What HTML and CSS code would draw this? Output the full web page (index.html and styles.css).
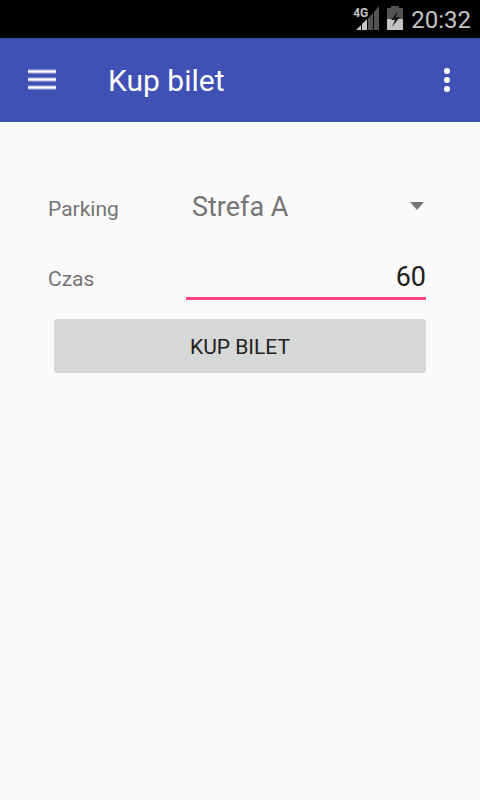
FILE: index.html
```html
<!DOCTYPE html>
<html lang="pl">
<head>
<meta charset="utf-8">
<meta name="viewport" content="width=device-width, initial-scale=1">
<title>Kup bilet</title>
<link rel="stylesheet" href="styles.css">
</head>
<body>
<div class="status-bar">
  <span class="network">4G</span>
  <svg class="signal" width="24" height="24" viewBox="0 0 24 24" aria-hidden="true">
    <path fill="#545454" d="M12 12.5L17 7v17h-5zM18 6l5-6v24h-5z"/>
    <path fill="#c4c4c4" d="M0 24l5-5v5zM6 18l5-5v11H6z"/>
  </svg>
  <svg class="battery" width="16" height="24" viewBox="0 0 16 24" aria-hidden="true">
    <path fill="#545454" d="M4 0h8v2h4v11H0V2h4z"/>
    <path fill="#c4c4c4" d="M0 13h16v11H0z"/>
    <path fill="#1c1c1c" d="M11 5L4 14h4l-3 7 8-10H9z"/>
  </svg>
  <time class="clock">20:32</time>
</div>
<header class="app-bar">
  <button class="icon-button" type="button" aria-label="Menu">
    <svg width="28" height="22" viewBox="0 0 28 22" aria-hidden="true">
      <path fill="#7986cb" d="M0 0h28v5H0zM0 8h28v5H0zM0 16h28v5H0z"/>
      <path fill="#cfd3ee" d="M0 1h28v3H0zM0 9h28v3H0zM0 17h28v3H0z"/>
      <path fill="#fff" d="M0 2h28v1H0zM0 10h28v1H0zM0 18h28v1H0z"/>
    </svg>
  </button>
  <h1 class="title">Kup bilet</h1>
  <button class="icon-button" type="button" aria-label="Więcej">
    <svg width="6" height="24" viewBox="0 0 6 24" aria-hidden="true">
      <g fill="#fff"><circle cx="3" cy="3" r="3"/><circle cx="3" cy="12" r="3"/><circle cx="3" cy="21" r="3"/></g>
    </svg>
  </button>
</header>
<main>
  <form class="ticket-form">
    <div class="field">
      <label for="parking">Parking</label>
      <div class="select-wrap">
        <select id="parking"><option>Strefa A</option></select>
        <svg class="arrow" width="14" height="8" viewBox="0 0 14 8" aria-hidden="true"><path fill="#757575" d="M0 0h14L7 8z"/></svg>
      </div>
    </div>
    <div class="field">
      <label for="time">Czas</label>
      <input id="time" type="text" inputmode="numeric" value="60">
    </div>
    <button class="buy" type="button">KUP BILET</button>
  </form>
</main>
</body>
</html>
```
FILE: styles.css
```css
* {
  box-sizing: border-box;
}

body {
  margin: 0;
  background: #fafafa;
  font-family: Roboto, "Noto Sans", sans-serif;
}

button,
input,
select {
  margin: 0;
  border: 0;
  background: none;
  font-family: inherit;
  outline: none;
}

svg {
  display: block;
}

.status-bar {
  display: flex;
  align-items: center;
  justify-content: flex-end;
  height: 38px;
  padding: 0 9px 2px;
  background: #000;
  color: #c4c4c4;
}

.network {
  align-self: flex-start;
  margin: 6px -12px 0 0;
  font-size: 12px;
  font-weight: 700;
  line-height: 14px;
  z-index: 1;
}

.battery {
  margin: 0 8px 0 7px;
}

.clock {
  padding-top: 4px;
  font-size: 24px;
  line-height: 32px;
}

.app-bar {
  display: flex;
  align-items: center;
  height: 84px;
  padding: 0 24px;
  background: linear-gradient(#3a4aa6, #3f51b5 4px);
  color: #fff;
}

.icon-button {
  padding: 4px;
}

.icon-button:last-child {
  margin-right: 2px;
}

.title {
  flex: 1;
  margin: 0 0 0 48px;
  padding-top: 2px;
  font-size: 30px;
  font-weight: 400;
  line-height: 36px;
}

.ticket-form {
  padding: 48px 54px 48px 48px;
}

.field {
  display: grid;
  grid-template-columns: 138px minmax(0, 1fr);
  align-items: baseline;
  height: 70px;
  padding-top: 12px;
  color: #757575;
}

label {
  font-size: 21px;
  line-height: 24px;
}

.select-wrap {
  position: relative;
}

select {
  width: 100%;
  height: 48px;
  padding: 2px 24px 0 6px;
  appearance: none;
  color: #757575;
  font-size: 27px;
}

.arrow {
  position: absolute;
  top: 20px;
  right: 2px;
  pointer-events: none;
}

input {
  width: 100%;
  height: 48px;
  padding: 4px 0 0;
  border-bottom: 3px solid #ff4081;
  color: #212121;
  font-size: 27px;
  text-align: right;
}

.buy {
  display: block;
  width: calc(100% - 6px);
  height: 54px;
  margin: 9px 0 0 6px;
  padding: 2px 0 0;
  border-radius: 3px;
  background: #d6d8d7;
  color: #212121;
  font-size: 21px;
}
```
